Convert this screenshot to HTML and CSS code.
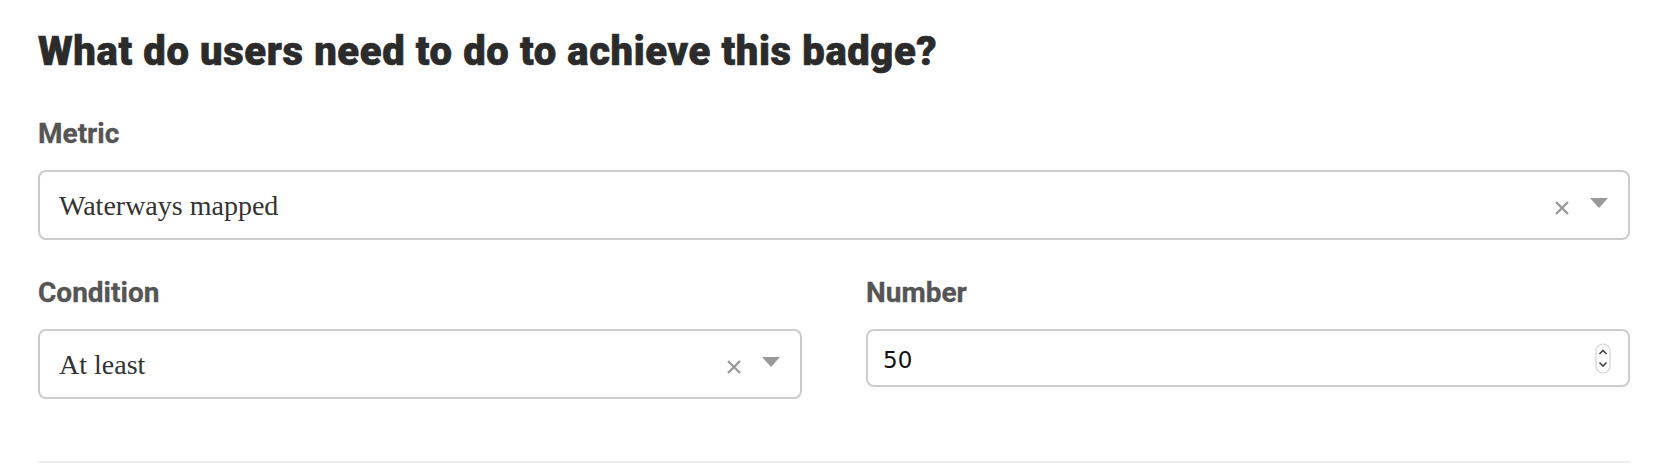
FILE: index.html
```html
<!DOCTYPE html>
<html>
<head>
<meta charset="utf-8">
<link rel="stylesheet" href="styles.css">
</head>
<body>
<div class="form">
  <h2 class="title">What do users need to do to achieve this badge?</h2>
  <div class="field">
    <div class="label">Metric</div>
    <div class="select">
      <span class="value">Waterways mapped</span>
      <span class="controls">
        <svg class="clear" width="16" height="16" viewBox="0 0 16 16"><path d="M2 2 L14 14 M14 2 L2 14" stroke="#999" stroke-width="2.4" fill="none"/></svg>
        <svg class="arrow" width="18" height="10" viewBox="0 0 18 10"><path d="M0 0 H18 L9 10 Z" fill="#999"/></svg>
      </span>
    </div>
  </div>
  <div class="row">
    <div class="field col">
      <div class="label">Condition</div>
      <div class="select">
        <span class="value">At least</span>
        <span class="controls">
          <svg class="clear" width="16" height="16" viewBox="0 0 16 16"><path d="M2 2 L14 14 M14 2 L2 14" stroke="#999" stroke-width="2.4" fill="none"/></svg>
          <svg class="arrow" width="18" height="10" viewBox="0 0 18 10"><path d="M0 0 H18 L9 10 Z" fill="#999"/></svg>
        </span>
      </div>
    </div>
    <div class="field col">
      <div class="label">Number</div>
      <div class="number">
        <span class="num">50</span>
        <svg class="spin" width="16" height="31" viewBox="0 0 16 31"><rect x="1" y="1" width="14" height="29" rx="7" fill="#fff" stroke="#d2d2d2" stroke-width="1.2"/><path d="M4.5 11 L8 7.5 L11.5 11" stroke="#444" stroke-width="1.6" fill="none"/><path d="M4.5 19.5 L8 23 L11.5 19.5" stroke="#444" stroke-width="1.6" fill="none"/></svg>
      </div>
    </div>
  </div>
  <div class="divider"></div>
</div>
</body>
</html>
```
FILE: styles.css
```css
html, body {
  margin: 0;
  padding: 0;
  background: #fff;
}
.form {
  padding: 28px 44px 0 38px;
  font-family: Roboto, "Liberation Sans", sans-serif;
}
.title {
  margin: 0 0 41px 0;
  font-size: 40px;
  line-height: 48px;
  font-weight: 900;
  letter-spacing: 0.6px;
  -webkit-text-stroke: 0.6px #2b2b2b;
  color: #2b2b2b;
}
.label {
  font-size: 28px;
  line-height: 34px;
  font-weight: 700;
  color: #555;
  -webkit-text-stroke: 0.3px #555;
  margin-bottom: 19px;
}
.select {
  box-sizing: border-box;
  height: 70px;
  border: 2px solid #cccccc;
  border-radius: 8px;
  display: flex;
  align-items: center;
  justify-content: space-between;
  padding: 0 20px 0 19px;
}
.value {
  font-family: "Liberation Serif", serif;
  font-size: 28px;
  color: #333;
  padding-top: 1px;
}
.controls {
  display: flex;
  align-items: center;
  gap: 20px;
}
.clear {
  margin-top: 6px;
}
.arrow {
  margin-top: -4px;
}
.row {
  display: flex;
  gap: 64px;
  margin-top: 36px;
}
.col {
  flex: 1;
}
.number {
  box-sizing: border-box;
  height: 58px;
  border: 2px solid #cccccc;
  border-radius: 8px;
  display: flex;
  align-items: center;
  justify-content: space-between;
  padding: 0 17px 0 15px;
}
.num {
  font-family: "DejaVu Sans", sans-serif;
  font-size: 23px;
  color: #111;
  padding-top: 3px;
}
.divider {
  margin-top: 62px;
  height: 2px;
  background: #ececec;
}
```
